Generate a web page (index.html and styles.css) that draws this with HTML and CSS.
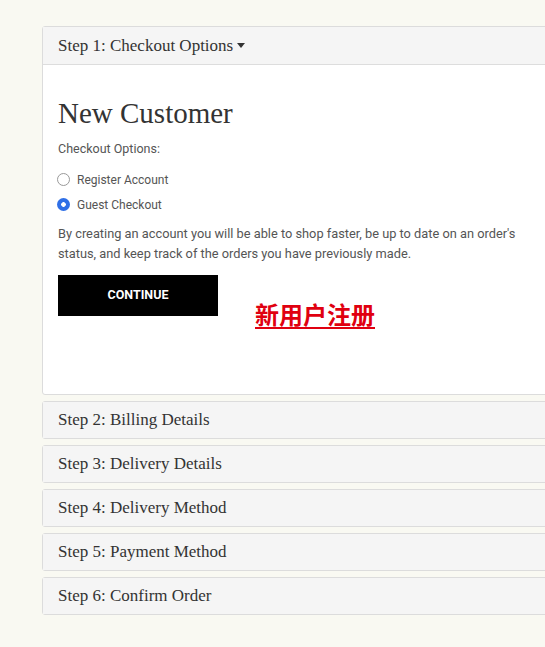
FILE: index.html
```html
<!DOCTYPE html>
<html lang="en">
<head>
  <meta charset="UTF-8">
  <meta name="viewport" content="width=device-width, initial-scale=1.0">
  <title>Checkout</title>
  <link rel="stylesheet" href="styles.css">
</head>
<body>
  <div class="checkout">
    <!-- Step 1 is open -->
    <div class="panel">
      <div class="panel-heading">Step 1: Checkout Options <span class="caret"></span></div>
      <div class="panel-body">
        <h2>New Customer</h2>
        <p class="label">Checkout Options:</p>
        <label class="radio"><span class="dot"></span>Register Account</label>
        <label class="radio"><span class="dot checked"></span>Guest Checkout</label>
        <p class="note">By creating an account you will be able to shop faster, be up to date on an order's status, and keep track of the orders you have previously made.</p>
        <div class="actions">
          <button class="btn-continue">CONTINUE</button>
          <a class="register-link" href="#">新用户注册</a>
        </div>
      </div>
    </div>

    <div class="panel"><div class="panel-heading">Step 2: Billing Details</div></div>
    <div class="panel"><div class="panel-heading">Step 3: Delivery Details</div></div>
    <div class="panel"><div class="panel-heading">Step 4: Delivery Method</div></div>
    <div class="panel"><div class="panel-heading">Step 5: Payment Method</div></div>
    <div class="panel"><div class="panel-heading">Step 6: Confirm Order</div></div>
  </div>
</body>
</html>
```

FILE: styles.css
```css
/* Page */
body {
  margin: 0;
  background-color: #f9f9f2;
  font-family: Roboto, "Liberation Sans", sans-serif;
  color: #555;
  overflow: hidden;
}

.checkout {
  margin: 26px 0 0 42px;
  width: 560px;
  display: flex;
  flex-direction: column;
  gap: 6px;
}

/* Accordion panels */
.panel {
  background-color: #fff;
  border: 1px solid #dcdcdc;
  border-radius: 3px;
}

.panel-heading {
  background-color: #f5f5f5;
  height: 37px;
  padding: 0 15px;
  display: flex;
  align-items: center;
  font-family: "Liberation Serif", "DejaVu Serif", serif;
  font-size: 17px;
  color: #333;
}

.panel:not(:first-child) .panel-heading {
  height: 36px;
  padding-bottom: 1px;
  box-sizing: border-box;
}

.panel:first-child .panel-heading {
  border-bottom: 1px solid #ddd;
}

.caret {
  display: inline-block;
  margin-left: 4px;
  border-top: 5px solid #333;
  border-left: 4px solid transparent;
  border-right: 4px solid transparent;
}

.panel-body {
  padding: 32px 15px 0;
  height: 297px;
}

h2 {
  margin: 0 0 11px;
  font-family: "Liberation Serif", "DejaVu Serif", serif;
  font-weight: normal;
  font-size: 29px;
  color: #333;
}

.label {
  margin: 0 0 11px;
  font-size: 12.5px;
}

.radio {
  display: flex;
  align-items: center;
  font-size: 12px;
  height: 25px;
  margin-left: -1px;
}

.dot {
  width: 11px;
  height: 11px;
  border: 1px solid #999;
  border-radius: 50%;
  margin-right: 7px;
  box-sizing: content-box;
}

.dot.checked {
  width: 13px;
  height: 13px;
  border: none;
  background: radial-gradient(circle, #fff 0 2px, #2f6fe6 2.6px);
}

.note {
  max-width: 475px;
  margin: 7px 0 11px;
  font-size: 12.8px;
  line-height: 20px;
}

.actions {
  display: flex;
  align-items: flex-start;
}

.btn-continue {
  width: 160px;
  height: 41px;
  border: none;
  background-color: #000;
  color: #fff;
  font-family: Roboto, "Liberation Sans", sans-serif;
  font-weight: bold;
  font-size: 12.5px;
  padding: 0 0 2px;
}

.register-link {
  margin: 24px 0 0 37px;
  color: #e00010;
  font-family: "Noto Sans CJK SC", sans-serif;
  font-size: 24px;
  font-weight: bold;
  line-height: 30px;
  text-decoration: underline;
  text-underline-offset: 3px;
}
```
